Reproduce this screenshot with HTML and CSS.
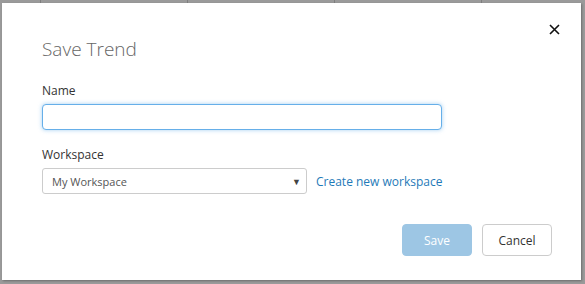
FILE: index.html
```html
<!DOCTYPE html>
<html lang="en">
<head>
    <meta charset="UTF-8">
    <meta name="viewport" content="width=device-width, initial-scale=1.0">
    <title>Save Trend</title>
    <link rel="stylesheet" href="styles.css">
</head>
<body>
    <div class="backdrop">
        <div class="grid-cols">
            <span></span><span></span><span></span><span></span>
        </div>
        <div class="modal">
            <button class="close" type="button" aria-label="Close">
                <svg width="11" height="11" viewBox="0 0 11 11">
                    <path d="M1 1 L10 10 M10 1 L1 10" stroke="#111" stroke-width="1.6" fill="none"/>
                </svg>
            </button>
            <h2>Save Trend</h2>
            <form class="save-form">
                <div class="field">
                    <label for="name">Name</label>
                    <input type="text" id="name" class="text-input">
                </div>
                <div class="field">
                    <label for="workspace">Workspace</label>
                    <div class="workspace-row">
                        <div class="select">
                            <span>My Workspace</span>
                            <span class="caret">&#9660;</span>
                        </div>
                        <a href="#" class="create-link">Create new workspace</a>
                    </div>
                </div>
                <div class="actions">
                    <button type="submit" class="btn btn-primary" disabled>Save</button>
                    <button type="button" class="btn btn-default">Cancel</button>
                </div>
            </form>
        </div>
    </div>
</body>
</html>
```

FILE: styles.css
```css
body {
    margin: 0;
    font-family: "Open Sans", sans-serif;
    background-color: #9a9a9a;
    overflow: hidden;
}

.backdrop {
    position: relative;
    width: 585px;
    height: 284px;
    padding: 3px 0 0 2px;
    box-sizing: border-box;
}

.grid-cols {
    position: absolute;
    top: 0;
    left: 40px;
    display: flex;
    gap: 146px;
}

.grid-cols span {
    width: 1px;
    height: 3px;
    background-color: #7f7f7f;
}

.modal {
    position: relative;
    width: 579px;
    height: 277px;
    background-color: #fff;
    padding: 33px 0 0 40px;
    box-sizing: border-box;
    box-shadow: 1px 1px 2px rgba(0, 0, 0, 0.3);
}

.close {
    position: absolute;
    top: 21px;
    right: 21px;
    background: none;
    border: none;
    padding: 0;
    cursor: pointer;
    line-height: 0;
}

h2 {
    margin: 0 0 20px;
    font-size: 19px;
    font-weight: 300;
    color: #666;
    line-height: 26px;
}

.field {
    margin-bottom: 16px;
}

.field label {
    display: block;
    font-size: 12px;
    color: #333;
    margin-bottom: 5px;
}

.text-input {
    display: block;
    width: 400px;
    height: 26px;
    border: 1px solid #66afe9;
    border-radius: 4px;
    box-shadow: 0 0 4px rgba(102, 175, 233, 0.6);
    box-sizing: border-box;
    outline: none;
}

.workspace-row {
    display: flex;
    align-items: center;
    gap: 9px;
}

.select {
    display: flex;
    justify-content: space-between;
    align-items: center;
    width: 265px;
    height: 26px;
    padding: 0 5px 0 9px;
    border: 1px solid #ccc;
    border-radius: 3px;
    box-sizing: border-box;
    font-size: 11px;
    color: #555;
}

.caret {
    font-size: 9px;
    color: #444;
}

.create-link {
    font-size: 12px;
    color: #1f7ab8;
    text-decoration: none;
}

.actions {
    display: flex;
    justify-content: flex-end;
    gap: 10px;
    margin: 30px 29px 0 0;
}

.btn {
    width: 70px;
    height: 32px;
    border-radius: 4px;
    font-family: "Open Sans", sans-serif;
    font-size: 12px;
    cursor: pointer;
}

.btn-primary {
    background-color: #9dc6e4;
    border: 1px solid #9dc6e4;
    color: #fff;
}

.btn-default {
    background-color: #fff;
    border: 1px solid #ccc;
    color: #333;
}
```
